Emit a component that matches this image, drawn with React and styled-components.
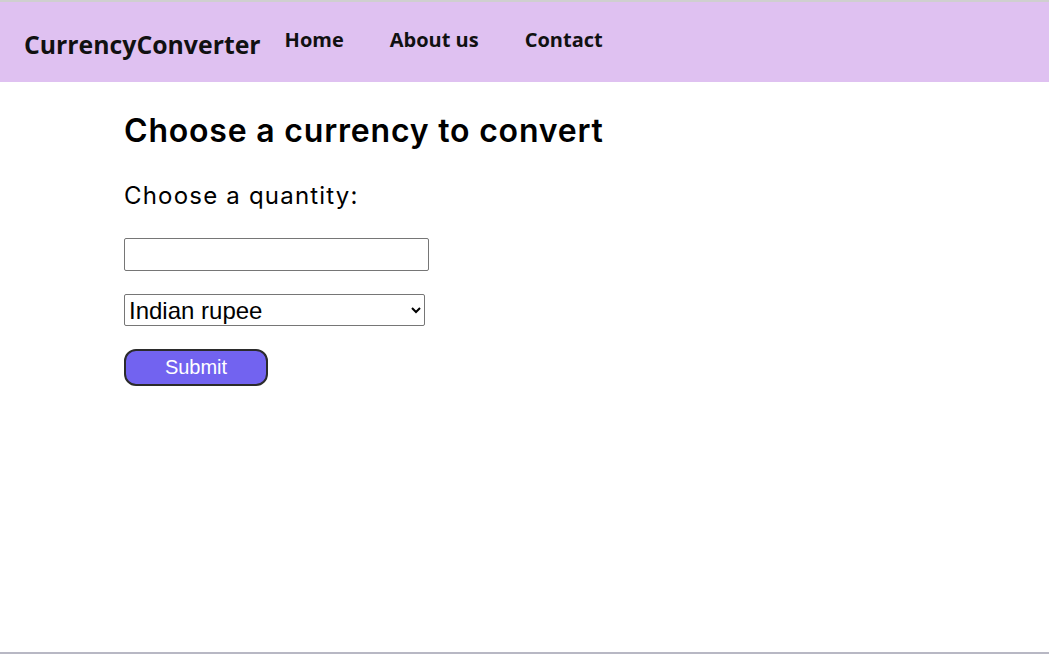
import React from 'react';
import styled, { createGlobalStyle } from 'styled-components';

const GlobalStyle = createGlobalStyle`
  html, body {
    margin: 0;
    padding: 0;
    background: #fff;
  }
  body {
    border-top: 2px solid #cfcfcf;
    min-height: 650px;
    border-bottom: 2px solid #b8b8c4;
    font-family: "Inter", "Liberation Sans", sans-serif;
  }
`;

const Nav = styled.nav`
  height: 80px;
  background: #dfc1f1;
  display: flex;
  align-items: center;
  padding-left: 24px;
  font-family: "Open Sans", sans-serif;
  font-weight: 700;
`;

const Brand = styled.div`
  font-size: 24.8px;
  color: #111;
  margin-top: 3px;
  margin-right: 24px;
`;

const Links = styled.ul`
  display: flex;
  gap: 46px;
  list-style: none;
  margin: 0 0 6px;
  padding: 0;
`;

const Link = styled.li`
  font-size: 20px;
  color: #111;
`;

const Main = styled.main`
  padding: 0 0 0 124px;
`;

const Title = styled.h1`
  font-size: 32px;
  font-weight: 600;
  letter-spacing: 0.8px;
  margin: 29px 0 0;
  color: #000;
`;

const Label = styled.p`
  font-size: 24px;
  font-weight: 400;
  letter-spacing: 1.2px;
  margin: 31px 0 0;
  color: #000;
`;

const Form = styled.form`
  display: flex;
  flex-direction: column;
  align-items: flex-start;
  margin-top: 28px;
`;

const Input = styled.input`
  width: 305px;
  height: 33px;
  box-sizing: border-box;
  border: 1px solid #767676;
  border-radius: 2px;
  font-size: 16px;
`;

const Select = styled.select`
  width: 301px;
  height: 32px;
  margin-top: 23px;
  box-sizing: border-box;
  font-family: "Liberation Sans", Arial, sans-serif;
  font-size: 24px;
  border: 1px solid #767676;
  border-radius: 2px;
  background: #fff;
  color: #000;
`;

const Button = styled.button`
  width: 144px;
  height: 37px;
  margin-top: 23px;
  background: #7263f0;
  border: 2px solid #2b2b2b;
  border-radius: 12px;
  color: #fff;
  font-family: "Liberation Sans", Arial, sans-serif;
  font-size: 20px;
`;

export default function App() {
  return (
    <>
      <GlobalStyle />
      <Nav>
        <Brand>CurrencyConverter</Brand>
        <Links>
          <Link>Home</Link>
          <Link>About us</Link>
          <Link>Contact</Link>
        </Links>
      </Nav>
      <Main>
        <Title>Choose a currency to convert</Title>
        <Label>Choose a quantity:</Label>
        <Form onSubmit={(e) => e.preventDefault()}>
          <Input type="number" />
          <Select defaultValue="inr">
            <option value="inr">Indian rupee</option>
            <option value="usd">US dollar</option>
            <option value="eur">Euro</option>
          </Select>
          <Button type="submit">Submit</Button>
        </Form>
      </Main>
    </>
  );
}
